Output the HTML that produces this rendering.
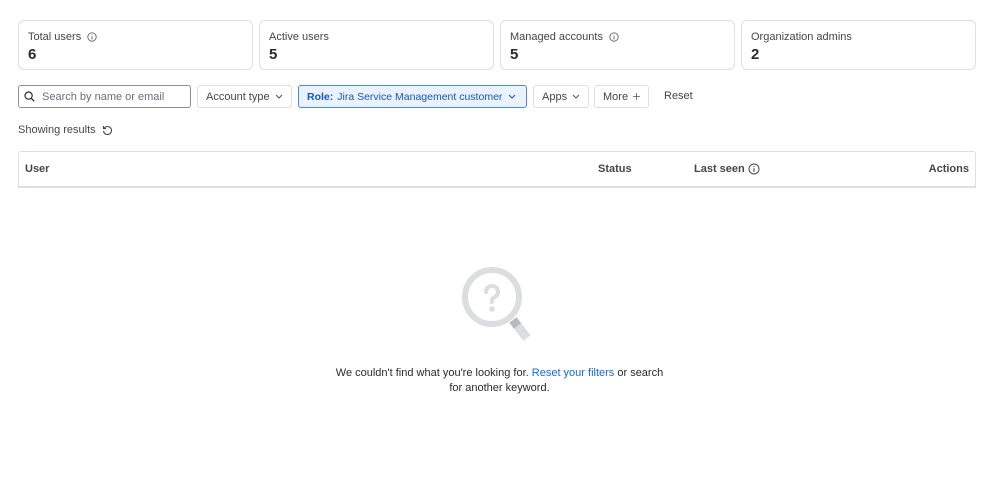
<!DOCTYPE html>
<html><head><meta charset="utf-8"><style>
*{box-sizing:border-box;margin:0;padding:0}
body{width:999px;height:483px;background:#fff;font-family:"Liberation Sans",sans-serif;color:#292a2e;position:relative;overflow:hidden}
.card{position:absolute;top:20px;height:50px;border:1px solid #dcdfe4;border-radius:6px;padding:9px 9px}
.card .l{font-size:11px;color:#44464c;display:flex;align-items:center;gap:6px;height:14px}
.card .v{font-size:15px;font-weight:bold;margin-top:2px;color:#292a2e}
.btn{position:absolute;top:85px;height:23px;border:1px solid #dcdfe4;border-radius:3px;font-size:11px;color:#44464c;display:flex;align-items:center;padding:0 8px;gap:5px;white-space:nowrap}
.abs{position:absolute}
</style></head><body>
<div class="card" style="left:18px;width:235px"><div class="l">Total users <svg width="10" height="10" viewBox="0 0 10 10"><circle cx="5" cy="5" r="4.2" fill="none" stroke="#666" stroke-width="0.9"/><path d="M5 4.4v3M5 2.6v.8" stroke="#666" stroke-width="1"/></svg></div><div class="v">6</div></div>
<div class="card" style="left:259px;width:235px"><div class="l">Active users</div><div class="v">5</div></div>
<div class="card" style="left:500px;width:235px"><div class="l">Managed accounts <svg width="10" height="10" viewBox="0 0 10 10"><circle cx="5" cy="5" r="4.2" fill="none" stroke="#666" stroke-width="0.9"/><path d="M5 4.4v3M5 2.6v.8" stroke="#666" stroke-width="1"/></svg></div><div class="v">5</div></div>
<div class="card" style="left:741px;width:235px"><div class="l">Organization admins</div><div class="v">2</div></div>

<div class="btn" style="left:18px;width:173px;border-color:#8c8f97;padding-left:5px;gap:7px;color:#6b6e76"><svg width="11" height="11" viewBox="0 0 11 11"><circle cx="4.6" cy="4.6" r="3.6" fill="none" stroke="#292a2e" stroke-width="1.2"/><path d="M7.3 7.3l3 3" stroke="#292a2e" stroke-width="1.2"/></svg>Search by name or email</div>
<div class="btn" style="left:197px;width:95px">Account type <svg width="8" height="5" viewBox="0 0 8 5"><path d="M1 1l3 3 3-3" fill="none" stroke="#555" stroke-width="1"/></svg></div>
<div class="btn" style="left:298px;width:229px;background:#e9f2fe;border-color:#4688ec;color:#1558bc;font-size:10.5px;gap:4px"><b>Role:</b><span>Jira Service Management customer</span><svg width="8" height="5" viewBox="0 0 8 5" style="margin-left:2px"><path d="M1 1l3 3 3-3" fill="none" stroke="#1558bc" stroke-width="1"/></svg></div>
<div class="btn" style="left:533px;width:56px">Apps <svg width="8" height="5" viewBox="0 0 8 5"><path d="M1 1l3 3 3-3" fill="none" stroke="#555" stroke-width="1"/></svg></div>
<div class="btn" style="left:594px;width:55px">More <svg width="9" height="9" viewBox="0 0 9 9"><path d="M4.5 0v9M0 4.5h9" stroke="#555" stroke-width="1"/></svg></div>
<div class="abs" style="left:664px;top:90px;font-size:11px;color:#44464c">Reset</div>

<div class="abs" style="left:18px;top:124px;font-size:11px;color:#44464c;display:flex;align-items:center;gap:6px">Showing results <svg width="11" height="11" viewBox="0 0 11 11"><path d="M2.2 3.2A4 4 0 1 1 1.5 6" fill="none" stroke="#44464c" stroke-width="1.1"/><path d="M1.5 1v2.6h2.6" fill="none" stroke="#44464c" stroke-width="1.1"/></svg></div>

<div class="abs" style="left:18px;top:151px;width:958px;height:37px;border:1px solid #dcdfe4;border-bottom:2px solid #dcdfe4;border-radius:3px 3px 0 0;font-size:11px;font-weight:bold;color:#44464c">
<span class="abs" style="left:6px;top:11px">User</span>
<span class="abs" style="left:579px;top:11px">Status</span>
<span class="abs" style="left:675px;top:11px;display:flex;align-items:center;gap:3px">Last seen <svg width="12" height="12" viewBox="0 0 12 12"><circle cx="6" cy="6" r="5" fill="none" stroke="#44464c" stroke-width="1"/><path d="M6 5.2v3.6M6 3v1" stroke="#44464c" stroke-width="1.1"/></svg></span>
<span class="abs" style="right:6px;top:11px">Actions</span>
</div>

<svg class="abs" style="left:460px;top:265px" width="75" height="80" viewBox="0 0 75 80">
<circle cx="32" cy="32" r="27" fill="none" stroke="#dcdde0" stroke-width="6"/>
<path d="M26 27a6 6 0 1 1 8 5.5c-2 1-2 2.5-2 4.5" fill="none" stroke="#dcdde0" stroke-width="4" stroke-linecap="round"/>
<circle cx="32" cy="44" r="2.8" fill="#dcdde0"/>
<path d="M53 55l14 18" stroke="#dcdde0" stroke-width="9"/>
<path d="M53 55l4.5 6" stroke="#b8babe" stroke-width="9"/>
</svg>

<div class="abs" style="left:300px;width:399px;top:366px;text-align:center;font-size:11px;line-height:15px;color:#292a2e">We couldn't find what you're looking for. <span style="color:#1868db">Reset your filters</span> or search<br>for another keyword.</div>
</body></html>
